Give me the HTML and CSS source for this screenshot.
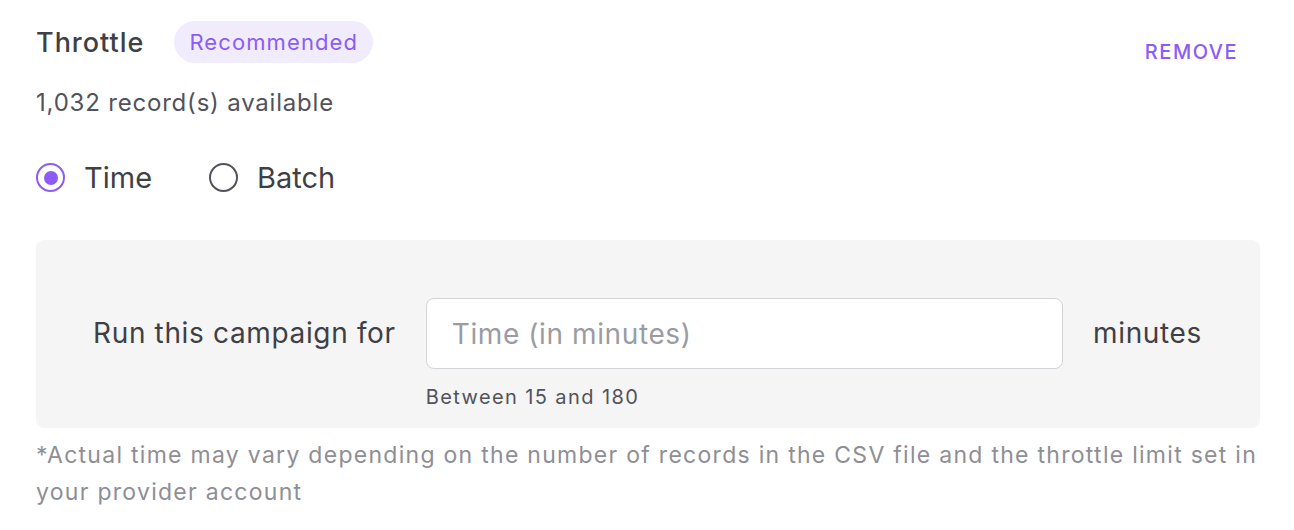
FILE: index.html
```html
<!DOCTYPE html>
<html>
<head>
<meta charset="utf-8">
<link rel="stylesheet" href="styles.css">
</head>
<body>
<div class="panel">
  <div class="header">
    <div class="title-group">
      <span class="title">Throttle</span>
      <span class="badge">Recommended</span>
    </div>
    <button class="remove">REMOVE</button>
  </div>
  <div class="records">1,032 record(s) available</div>
  <div class="radios">
    <label class="radio">
      <span class="dot checked"></span>
      <span class="radio-label">Time</span>
    </label>
    <label class="radio">
      <span class="dot"></span>
      <span class="radio-label">Batch</span>
    </label>
  </div>
  <div class="box">
    <div class="row">
      <span class="run-label">Run this campaign for</span>
      <div class="field">
        <input class="input" type="text" placeholder="Time (in minutes)">
        <div class="hint">Between 15 and 180</div>
      </div>
      <span class="unit">minutes</span>
    </div>
  </div>
  <p class="note">*Actual time may vary depending on the number of records in the CSV file and the throttle limit set in your provider account</p>
</div>
</body>
</html>
```
FILE: styles.css
```css
* { box-sizing: border-box; }
body {
  margin: 0;
  background: #ffffff;
  font-family: Inter, "Noto Sans", sans-serif;
  color: #3f3f46;
}
.panel {
  padding: 21px 34px 0 36px;
}
.header {
  display: flex;
  justify-content: space-between;
  align-items: flex-start;
}
.title-group {
  display: flex;
  align-items: center;
  gap: 30px;
}
.title {
  font-size: 27px;
  font-weight: 500;
  letter-spacing: 1px;
  color: #3f3f46;
}
.badge {
  display: inline-flex;
  align-items: center;
  height: 42px;
  padding: 0 15px;
  border-radius: 21px;
  background: #f0ebfd;
  color: #8b5cf6;
  font-size: 22px;
  letter-spacing: 1.1px;
}
.remove {
  margin-top: 19px;
  margin-right: 22px;
  background: none;
  border: 0;
  padding: 0;
  font-family: inherit;
  font-size: 20px;
  font-weight: 500;
  color: #8b5cf6;
  letter-spacing: 1.5px;
}
.records {
  margin-top: 24px;
  font-size: 24px;
  letter-spacing: 0.8px;
  color: #52525b;
}
.radios {
  display: flex;
  gap: 57px;
  margin-top: 43px;
}
.radio {
  display: flex;
  align-items: center;
  gap: 19px;
}
.dot {
  width: 29px;
  height: 29px;
  border-radius: 50%;
  border: 2.5px solid #52525b;
  display: flex;
  align-items: center;
  justify-content: center;
}
.dot.checked {
  border-color: #8b5cf6;
}
.dot.checked::after {
  content: "";
  width: 14px;
  height: 14px;
  border-radius: 50%;
  background: #8b5cf6;
}
.radio-label {
  font-size: 29px;
  letter-spacing: 0;
  color: #3f3f46;
}
.box {
  margin-top: 45px;
  background: #f5f5f5;
  border-radius: 8px;
  padding: 58px 58px 19px 57px;
}
.row {
  display: flex;
  align-items: flex-start;
  gap: 30px;
}
.run-label, .unit {
  font-size: 28px;
  letter-spacing: 0.65px;
  color: #3f3f46;
  line-height: 71px;
}
.field {
  flex: 1;
  display: flex;
  flex-direction: column;
}
.input {
  height: 71px;
  width: 100%;
  border: 1px solid #d4d4d8;
  border-radius: 8px;
  background: #ffffff;
  padding: 0 25px;
  font-family: inherit;
  font-size: 28px;
  letter-spacing: 0.6px;
  color: #3f3f46;
  outline: none;
}
.input::placeholder {
  color: #9b9ba3;
}
.hint {
  margin-top: 16px;
  font-size: 20px;
  letter-spacing: 1.4px;
  color: #52525b;
}
.note {
  margin: 9px 0 0;
  font-size: 23px;
  letter-spacing: 1.28px;
  line-height: 37px;
  color: #8e8e95;
}
```
